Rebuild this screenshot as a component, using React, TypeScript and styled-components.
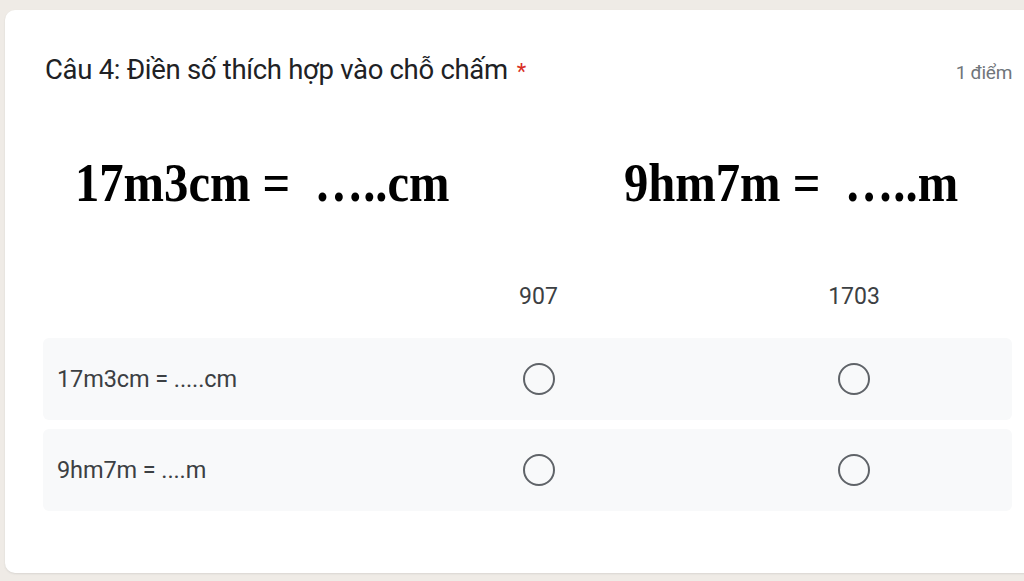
import React from 'react'
import styled, { createGlobalStyle } from 'styled-components'

const GlobalStyle = createGlobalStyle`
  html, body {
    margin: 0;
    padding: 0;
    background: #efebe6;
    overflow: hidden;
  }
  body {
    font-family: Roboto, 'Noto Sans', Arial, sans-serif;
  }
`

const Page = styled.div`
  width: 1024px;
  height: 581px;
  padding: 10px 0 0 5px;
  box-sizing: border-box;
`

const Card = styled.div`
  width: 1040px;
  height: 563px;
  background: #ffffff;
  border-radius: 10px;
  box-shadow: 0 1px 2px rgba(60, 64, 67, 0.12);
  padding: 43px 0 0 40px;
  box-sizing: border-box;
`

const Header = styled.div`
  display: flex;
  justify-content: space-between;
  align-items: baseline;
  width: 967px;
`

const Title = styled.div`
  font-family: Roboto, sans-serif;
  font-size: 27.5px;
  letter-spacing: -0.3px;
  color: #202124;
`

const Required = styled.span`
  color: #d93025;
  margin-left: 9px;
  font-size: 22px;
`

const Points = styled.div`
  font-family: Roboto, sans-serif;
  font-size: 19px;
  color: #70757a;
  letter-spacing: -0.3px;
`

const Figure = styled.div`
  display: flex;
  height: 112px;
  margin-top: 41px;
  padding-left: 30px;
  align-items: center;
`

const Equation = styled.div<{ $width: number }>`
  width: ${(p) => p.$width}px;
  font-family: 'Liberation Serif', 'Times New Roman', serif;
  font-weight: bold;
  font-size: 54px;
  color: #000;
  white-space: pre;
  transform: scaleX(0.9);
  transform-origin: left center;
`

const Grid = styled.div`
  margin-top: 24px;
  margin-left: -2px;
  width: 969px;
  display: flex;
  flex-direction: column;
  gap: 9px;
`

const GridRow = styled.div<{ $shaded?: boolean }>`
  display: grid;
  grid-template-columns: 338px 315px 316px;
  align-items: center;
  height: ${(p) => (p.$shaded ? '82px' : '66px')};
  background: ${(p) => (p.$shaded ? '#f8f9fa' : 'transparent')};
  border-radius: 6px;
`

const ColHead = styled.div`
  text-align: center;
  font-size: 23px;
  color: #3c4043;
`

const RowLabel = styled.div`
  padding-left: 14px;
  font-size: 23.5px;
  color: #3c4043;
  letter-spacing: -0.1px;
`

const Cell = styled.div`
  display: flex;
  justify-content: center;
  align-items: center;
`

const Radio = styled.div`
  width: 28px;
  height: 28px;
  border: 2.5px solid #5f6368;
  border-radius: 50%;
`

const columns = ['907', '1703']
const rows = ['17m3cm = .....cm', '9hm7m = ....m']

export default function App() {
  return (
    <>
      <GlobalStyle />
      <Page>
        <Card>
          <Header>
            <Title>
              Câu 4: Điền số thích hợp vào chỗ chấm<Required>*</Required>
            </Title>
            <Points>1 điểm</Points>
          </Header>
          <Figure>
            <Equation $width={549}>{'17m3cm =  …..cm'}</Equation>
            <Equation $width={400}>{'9hm7m =  …..m'}</Equation>
          </Figure>
          <Grid>
            <GridRow>
              <div />
              {columns.map((c) => (
                <ColHead key={c}>{c}</ColHead>
              ))}
            </GridRow>
            {rows.map((r) => (
              <GridRow key={r} $shaded>
                <RowLabel>{r}</RowLabel>
                {columns.map((c) => (
                  <Cell key={c}>
                    <Radio />
                  </Cell>
                ))}
              </GridRow>
            ))}
          </Grid>
        </Card>
      </Page>
    </>
  )
}
